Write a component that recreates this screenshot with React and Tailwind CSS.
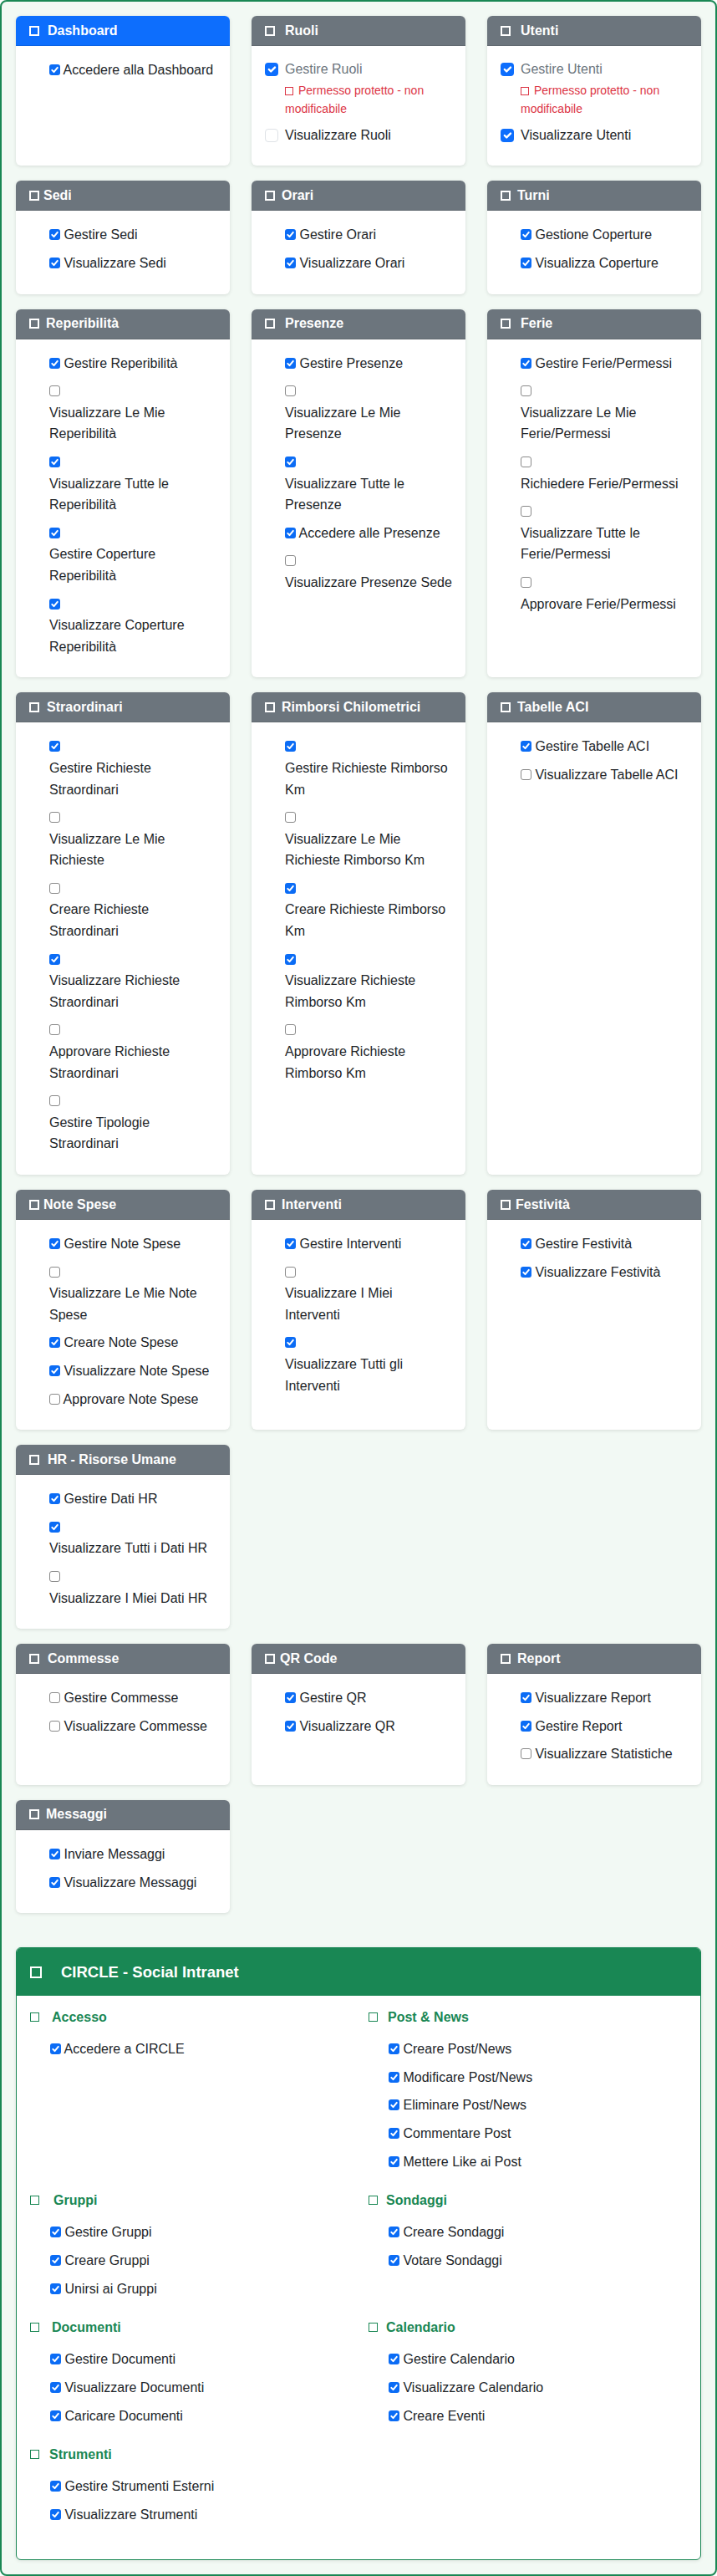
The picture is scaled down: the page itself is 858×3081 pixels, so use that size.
import React from "react";

// checkbox nativo "stile mac" (13px)
function Box({ checked }) {
  return (
    <span
      className={`inline-block w-[13px] h-[13px] rounded-[3px] align-[-1px] ${
        checked ? "bg-[#0b6cf5]" : "bg-white border border-[#8a8a8a]"
      }`}
    >
      {checked ? (
        <svg viewBox="0 0 13 13" className="block w-[13px] h-[13px]">
          <path
            d="M3.3 6.9 L5.5 9.1 L9.8 3.9"
            fill="none"
            stroke="white"
            strokeWidth="2"
            strokeLinecap="round"
            strokeLinejoin="round"
          />
        </svg>
      ) : null}
    </span>
  );
}

// checkbox bootstrap (16px)
function Box16({ checked }) {
  return (
    <span
      className={`mt-1 shrink-0 w-4 h-4 rounded-[4px] ${
        checked ? "bg-[#0d6efd]" : "bg-white border border-[#dee2e6]"
      }`}
    >
      {checked ? (
        <svg viewBox="0 0 20 20" className="block w-4 h-4">
          <path
            d="m6 10 3 3 6-6"
            fill="none"
            stroke="white"
            strokeWidth="3"
            strokeLinecap="round"
            strokeLinejoin="round"
          />
        </svg>
      ) : null}
    </span>
  );
}

const group1 = [
  { title: "Dashboard", blue: true, ml: "ml-[10px]", items: [[1, "Accedere alla Dashboard"]] },
  { title: "Ruoli", ml: "ml-[12px]", protectedLabel: "Gestire Ruoli", second: [0, "Visualizzare Ruoli"] },
  { title: "Utenti", ml: "ml-[12px]", protectedLabel: "Gestire Utenti", second: [1, "Visualizzare Utenti"] },
  { title: "Sedi", ml: "ml-[5px]", items: [[1, "Gestire Sedi"], [1, "Visualizzare Sedi"]] },
  { title: "Orari", ml: "ml-[8px]", items: [[1, "Gestire Orari"], [1, "Visualizzare Orari"]] },
  { title: "Turni", ml: "ml-[8px]", items: [[1, "Gestione Coperture"], [1, "Visualizza Coperture"]] },
  {
    title: "Reperibilità",
    ml: "ml-[8px]",
    items: [
      [1, "Gestire Reperibilità"],
      [0, ["Visualizzare Le Mie", "Reperibilità"]],
      [1, ["Visualizzare Tutte le", "Reperibilità"]],
      [1, ["Gestire Coperture", "Reperibilità"]],
      [1, ["Visualizzare Coperture", "Reperibilità"]],
    ],
  },
  {
    title: "Presenze",
    ml: "ml-[12px]",
    items: [
      [1, "Gestire Presenze"],
      [0, ["Visualizzare Le Mie", "Presenze"]],
      [1, ["Visualizzare Tutte le", "Presenze"]],
      [1, "Accedere alle Presenze"],
      [0, ["Visualizzare Presenze Sede"]],
    ],
  },
  {
    title: "Ferie",
    ml: "ml-[12px]",
    items: [
      [1, "Gestire Ferie/Permessi"],
      [0, ["Visualizzare Le Mie", "Ferie/Permessi"]],
      [0, ["Richiedere Ferie/Permessi"]],
      [0, ["Visualizzare Tutte le", "Ferie/Permessi"]],
      [0, ["Approvare Ferie/Permessi"]],
    ],
  },
  {
    title: "Straordinari",
    ml: "ml-[9px]",
    items: [
      [1, ["Gestire Richieste", "Straordinari"]],
      [0, ["Visualizzare Le Mie", "Richieste"]],
      [0, ["Creare Richieste", "Straordinari"]],
      [1, ["Visualizzare Richieste", "Straordinari"]],
      [0, ["Approvare Richieste", "Straordinari"]],
      [0, ["Gestire Tipologie", "Straordinari"]],
    ],
  },
  {
    title: "Rimborsi Chilometrici",
    ml: "ml-[8px]",
    items: [
      [1, ["Gestire Richieste Rimborso", "Km"]],
      [0, ["Visualizzare Le Mie", "Richieste Rimborso Km"]],
      [1, ["Creare Richieste Rimborso", "Km"]],
      [1, ["Visualizzare Richieste", "Rimborso Km"]],
      [0, ["Approvare Richieste", "Rimborso Km"]],
    ],
  },
  { title: "Tabelle ACI", ml: "ml-[8px]", items: [[1, "Gestire Tabelle ACI"], [0, "Visualizzare Tabelle ACI"]] },
  {
    title: "Note Spese",
    ml: "ml-[5px]",
    items: [
      [1, "Gestire Note Spese"],
      [0, ["Visualizzare Le Mie Note", "Spese"]],
      [1, "Creare Note Spese"],
      [1, "Visualizzare Note Spese"],
      [0, "Approvare Note Spese"],
    ],
  },
  {
    title: "Interventi",
    ml: "ml-[8px]",
    items: [
      [1, "Gestire Interventi"],
      [0, ["Visualizzare I Miei", "Interventi"]],
      [1, ["Visualizzare Tutti gli", "Interventi"]],
    ],
  },
  { title: "Festività", ml: "ml-[6px]", items: [[1, "Gestire Festività"], [1, "Visualizzare Festività"]] },
  {
    title: "HR - Risorse Umane",
    ml: "ml-[10px]",
    items: [
      [1, "Gestire Dati HR"],
      [1, ["Visualizzare Tutti i Dati HR"]],
      [0, ["Visualizzare I Miei Dati HR"]],
    ],
  },
];

const group2 = [
  { title: "Commesse", ml: "ml-[10px]", items: [[0, "Gestire Commesse"], [0, "Visualizzare Commesse"]] },
  { title: "QR Code", ml: "ml-[6px]", items: [[1, "Gestire QR"], [1, "Visualizzare QR"]] },
  {
    title: "Report",
    ml: "ml-[8px]",
    items: [[1, "Visualizzare Report"], [1, "Gestire Report"], [0, "Visualizzare Statistiche"]],
  },
  { title: "Messaggi", ml: "ml-[8px]", items: [[1, "Inviare Messaggi"], [1, "Visualizzare Messaggi"]] },
];

const circle = [
  { title: "Accesso", ml: "ml-[15px]", items: ["Accedere a CIRCLE"] },
  {
    title: "Post & News",
    ml: "ml-[12px]",
    items: ["Creare Post/News", "Modificare Post/News", "Eliminare Post/News", "Commentare Post", "Mettere Like ai Post"],
  },
  { title: "Gruppi", ml: "ml-[17px]", items: ["Gestire Gruppi", "Creare Gruppi", "Unirsi ai Gruppi"] },
  { title: "Sondaggi", ml: "ml-[10px]", items: ["Creare Sondaggi", "Votare Sondaggi"] },
  { title: "Documenti", ml: "ml-[15px]", items: ["Gestire Documenti", "Visualizzare Documenti", "Caricare Documenti"] },
  { title: "Calendario", ml: "ml-[10px]", items: ["Gestire Calendario", "Visualizzare Calendario", "Creare Eventi"] },
  { title: "Strumenti", ml: "ml-[12px]", items: ["Gestire Strumenti Esterni", "Visualizzare Strumenti"] },
];

function Item({ checked, label }) {
  const wrapped = Array.isArray(label);
  return (
    <li className="mb-2">
      <Box checked={checked} />{" "}
      {wrapped ? (
        <span className="block">
          {label.map((l) => (
            <span key={l} className="block whitespace-nowrap">
              {l}
            </span>
          ))}
        </span>
      ) : (
        <span className="whitespace-nowrap">{label}</span>
      )}
    </li>
  );
}

function Card({ card }) {
  return (
    <div className="bg-white rounded-[6px] overflow-hidden shadow-[0_1px_4px_rgba(0,0,0,0.12)]">
      <div
        className={`h-[36px] flex items-center px-4 text-white font-bold border-b border-black/10 ${
          card.blue ? "bg-[#0d6efd]" : "bg-[#6c757d]"
        }`}
      >
        <span className="w-3 h-3 border-2 border-white shrink-0" />
        <span className={`whitespace-nowrap ${card.ml}`}>{card.title}</span>
      </div>
      {card.protectedLabel ? (
        <div className="p-4">
          <div className="flex gap-2 leading-6 mb-[9px]">
            <Box16 checked />
            <div>
              <div className="text-[#6c757d]">{card.protectedLabel}</div>
              <div className="mt-[3px] text-[14px] leading-[21.7px] text-[#dc3545]">
                <span className="inline-block w-[10px] h-[10px] border-[1.5px] border-[#dc3545] align-[-1px] mr-[6px]" />
                Permesso protetto - non
                <br />
                modificabile
              </div>
            </div>
          </div>
          <div className="flex gap-2 leading-6 mb-2">
            <Box16 checked={card.second[0]} />
            <span>{card.second[1]}</span>
          </div>
        </div>
      ) : (
        <ul className="pt-4 pb-4 pl-10 pr-[14px] leading-[25.6px]">
          {card.items.map(([c, label], i) => (
            <Item key={i} checked={c} label={label} />
          ))}
        </ul>
      )}
    </div>
  );
}

function Circle() {
  return (
    <div className="mt-[41px] bg-white rounded-[6px] border border-[#198754] overflow-hidden shadow-[0_1px_4px_rgba(0,0,0,0.1)]">
      <div className="h-[57px] bg-[#198754] flex items-center px-4 text-white">
        <span className="w-[14px] h-[14px] border-2 border-white shrink-0" />
        <span className="ml-[23px] font-bold text-[18.5px]">CIRCLE - Social Intranet</span>
      </div>
      <div className="p-4 grid grid-cols-2 gap-x-6">
        {circle.map((s) => (
          <div key={s.title}>
            <div className="flex items-center h-[19.2px] mb-4 font-semibold text-[#198754]">
              <span className="w-[11px] h-[11px] border-[1.5px] border-[#198754] shrink-0" />
              <span className={s.ml}>{s.title}</span>
            </div>
            <ul className="pl-6 pb-4 leading-[25.6px]">
              {s.items.map((t) => (
                <Item key={t} checked label={t} />
              ))}
            </ul>
          </div>
        ))}
      </div>
    </div>
  );
}

export default function App() {
  return (
    <div className="font-['Liberation_Sans',Arial,sans-serif] text-[16px] text-[#212529]">
      <div className="border-2 border-[#198754] rounded-[8px] bg-[#f2f9f4] p-[17px]">
        <div className="flex flex-col gap-[18px]">
          <div className="grid grid-cols-3 gap-x-[26px] gap-y-[18px]">
            {group1.map((c) => (
              <Card key={c.title} card={c} />
            ))}
          </div>
          <div className="grid grid-cols-3 gap-x-[26px] gap-y-[18px]">
            {group2.map((c) => (
              <Card key={c.title} card={c} />
            ))}
          </div>
        </div>
        <Circle />
      </div>
    </div>
  );
}
